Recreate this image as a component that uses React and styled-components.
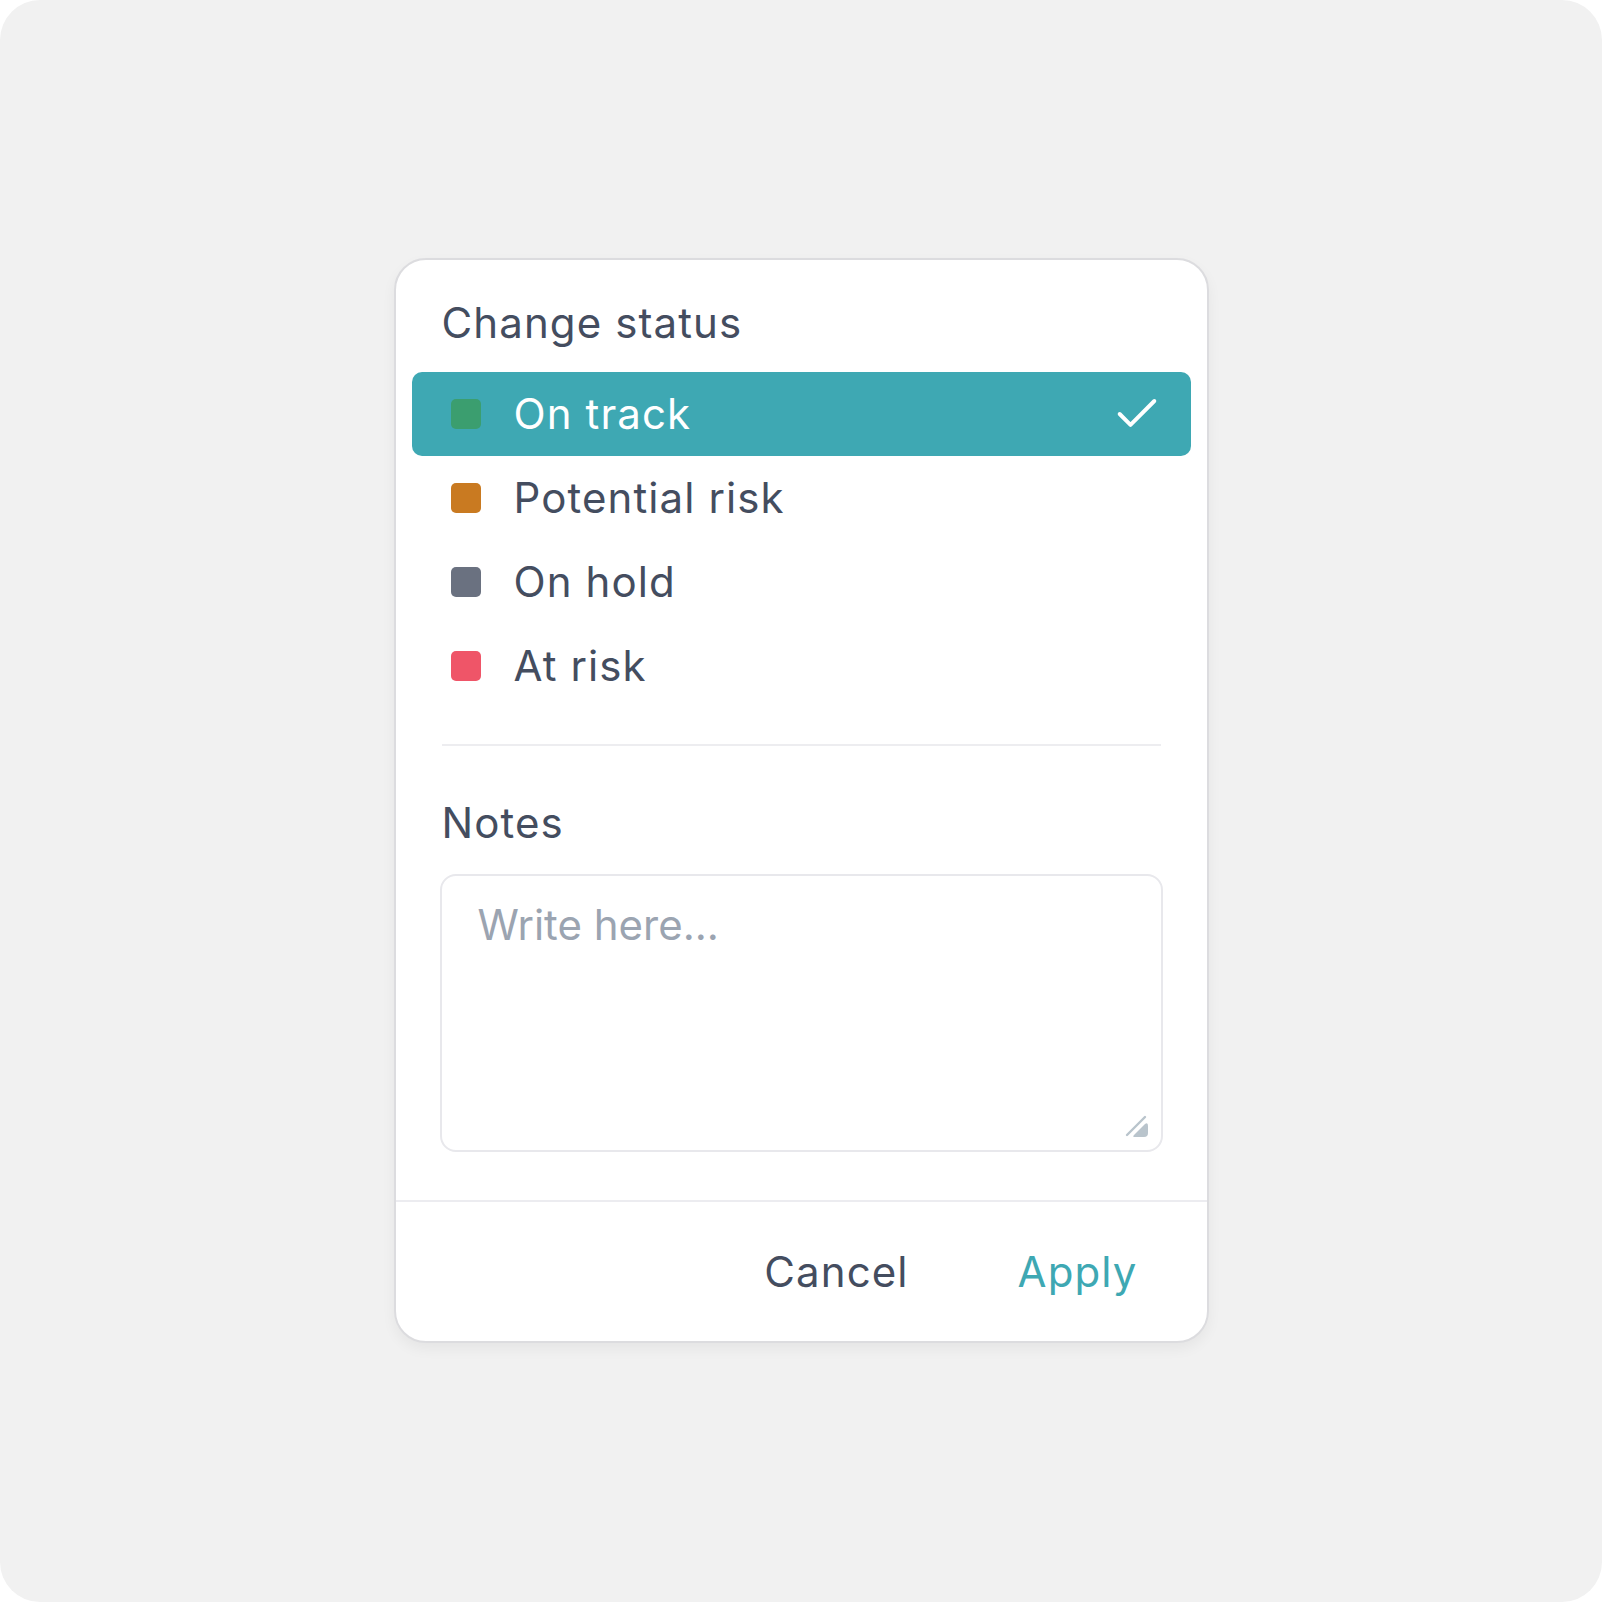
import React, { useState } from "react";
import styled, { createGlobalStyle } from "styled-components";
import { Check } from "lucide-react";

const statuses = [
  { id: "on-track", label: "On track", color: "#3b9e6f" },
  { id: "potential-risk", label: "Potential risk", color: "#c97a21" },
  { id: "on-hold", label: "On hold", color: "#6a7180" },
  { id: "at-risk", label: "At risk", color: "#ef5568" },
];

const App = () => {
  const [selected, setSelected] = useState("on-track");

  return (
    <>
      <GlobalStyle />
      <Frame>
        <Card>
          <Body>
            <Heading>Change status</Heading>
            <List>
              {statuses.map((s) => (
                <Row
                  key={s.id}
                  $active={selected === s.id}
                  onClick={() => setSelected(s.id)}
                >
                  <Swatch $color={s.color} />
                  <Label>{s.label}</Label>
                  {selected === s.id && (
                    <Tick size={52} strokeWidth={1.8} color="#ffffff" />
                  )}
                </Row>
              ))}
            </List>
            <NotesSection>
              <Divider />
              <Heading $notes>Notes</Heading>
              <Field>
                <TextArea placeholder="Write here..." />
                <Grip width="26" height="26" viewBox="0 0 26 26">
                  <path
                    d="M2 21 L20 3"
                    stroke="#b9c4cc"
                    strokeWidth="2.4"
                    strokeLinecap="round"
                  />
                  <path
                    d="M9 21 L20 10 Q23 8 23 12 L23 19 Q23 23 19 23 L10 23 Q7 23 9 21 Z"
                    fill="#b9c4cc"
                  />
                </Grip>
              </Field>
            </NotesSection>
          </Body>
          <Footer>
            <Action>Cancel</Action>
            <Action $primary>Apply</Action>
          </Footer>
        </Card>
      </Frame>
    </>
  );
};

export default App;

const GlobalStyle = createGlobalStyle`
  html, body {
    margin: 0;
    padding: 0;
    background: #ffffff;
  }
  body {
    font-family: Inter, "Noto Sans", "Liberation Sans", sans-serif;
  }
`;

const Frame = styled.div`
  width: 1602px;
  height: 1602px;
  background: #f1f1f1;
  border-radius: 40px;
  display: flex;
  justify-content: center;
  align-items: flex-start;
  padding-top: 258px;
  box-sizing: border-box;
`;

const Card = styled.div`
  width: 815px;
  background: #ffffff;
  border: 2px solid #dcdcdf;
  border-radius: 32px;
  box-shadow: 0 6px 14px rgba(0, 0, 0, 0.05);
  box-sizing: border-box;
  overflow: hidden;
`;

const Body = styled.div`
  padding: 38px 16px 48px;
`;

const Heading = styled.div`
  font-size: 42px;
  line-height: 50px;
  letter-spacing: 1.1px;
  color: #444d5f;
  padding-left: ${(p) => (p.$notes ? "2px" : "30px")};
  margin-top: ${(p) => (p.$notes ? "52px" : "0")};
`;

const List = styled.div`
  margin-top: 24px;
  display: flex;
  flex-direction: column;
`;

const Row = styled.div`
  height: 84px;
  display: flex;
  align-items: center;
  padding: 0 28px 0 39px;
  border-radius: 10px;
  background: ${(p) => (p.$active ? "#3ea8b3" : "transparent")};
  color: ${(p) => (p.$active ? "#ffffff" : "#444d5f")};
  cursor: pointer;
`;

const Swatch = styled.span`
  width: 30px;
  height: 30px;
  border-radius: 5px;
  background: ${(p) => p.$color};
  flex-shrink: 0;
`;

const Label = styled.span`
  flex: 1;
  margin-left: 33px;
  font-size: 42px;
  line-height: 50px;
  letter-spacing: 1.1px;
`;

const Tick = styled(Check)`
  flex-shrink: 0;
`;

const NotesSection = styled.div`
  padding: 0 28px;
`;

const Divider = styled.div`
  margin: 36px 2px 0;
  height: 2px;
  background: #ededf0;
`;

const Field = styled.div`
  position: relative;
  margin-top: 26px;
`;

const TextArea = styled.textarea`
  display: block;
  width: 100%;
  height: 278px;
  box-sizing: border-box;
  border: 2px solid #e8e8ec;
  border-radius: 16px;
  padding: 24px 36px;
  font-family: Inter, "Noto Sans", "Liberation Sans", sans-serif;
  font-size: 42px;
  line-height: 50px;
  color: #444d5f;
  resize: none;
  outline: none;

  &::placeholder {
    color: #9ba4b1;
  }
`;

const Grip = styled.svg`
  position: absolute;
  right: 12px;
  bottom: 12px;
  pointer-events: none;
`;

const Footer = styled.div`
  height: 139px;
  border-top: 2px solid #ececf0;
  display: flex;
  align-items: center;
  justify-content: flex-end;
  gap: 37px;
  padding-right: 33px;
`;

const Action = styled.button`
  background: none;
  border: none;
  padding: 0 36px;
  font-family: Inter, "Noto Sans", "Liberation Sans", sans-serif;
  font-size: 42px;
  line-height: 50px;
  letter-spacing: 1.1px;
  color: ${(p) => (p.$primary ? "#3ea8b3" : "#444d5f")};
  cursor: pointer;
`;
